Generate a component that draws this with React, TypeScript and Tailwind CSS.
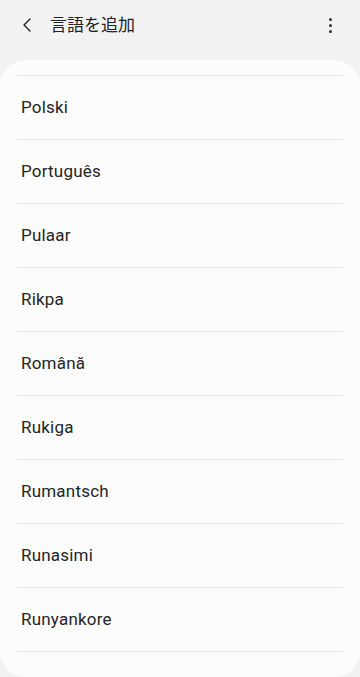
import React from "react";

const languages = ["Polski", "Português", "Pulaar", "Rikpa", "Română", "Rukiga", "Rumantsch", "Runasimi", "Runyankore"];

export default function App() {
  return (
    <div
      className="w-[360px] h-[677px] overflow-hidden bg-[#f2f2f2] flex flex-col"
      style={{ fontFamily: "Roboto, 'Noto Sans CJK JP', sans-serif" }}
    >
      {/* Header */}
      <div className="h-[50px] flex items-center pl-[20px] pr-[20px] shrink-0">
        <svg width="14" height="16" viewBox="0 0 14 16" className="text-[#222]">
          <path d="M10 2 L4 8 L10 14" fill="none" stroke="currentColor" strokeWidth="1.4" strokeLinecap="round" strokeLinejoin="round" />
        </svg>
        <h1 className="ml-[16px] text-[17px] text-[#222] leading-none">言語を追加</h1>
        <div className="ml-auto flex flex-col items-center gap-[3px] pr-[8px]">
          <span className="w-[3px] h-[3px] rounded-full bg-[#333]" />
          <span className="w-[3px] h-[3px] rounded-full bg-[#333]" />
          <span className="w-[3px] h-[3px] rounded-full bg-[#333]" />
        </div>
      </div>

      <div className="h-[10px] shrink-0" />

      {/* List card */}
      <div className="flex-1 bg-[#fcfcfc] rounded-[26px] pt-[15px] px-[17px] overflow-hidden">
        <div className="border-b border-[#e4e4e4]" />
        {languages.map((name) => (
          <div key={name} className="h-[64px] flex items-center border-b border-[#e4e4e4] pl-[4px]">
            <span className="text-[17px] text-[#252525] tracking-[0.2px]">{name}</span>
          </div>
        ))}
      </div>
    </div>
  );
}
